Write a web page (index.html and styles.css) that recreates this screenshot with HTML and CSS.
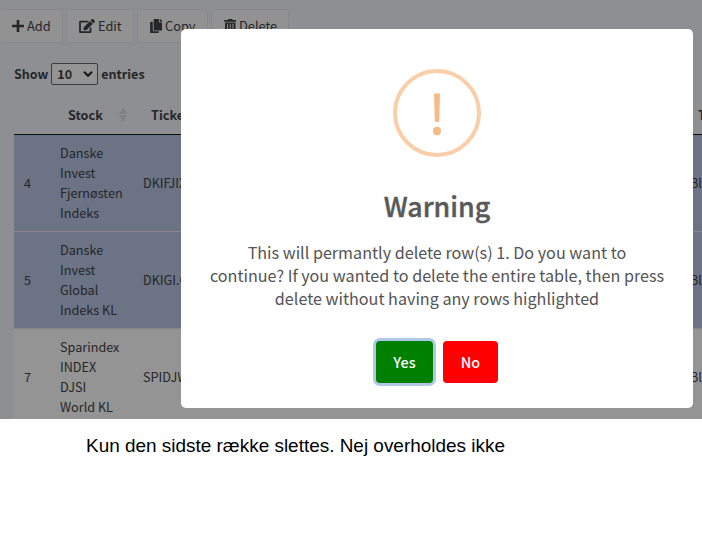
FILE: index.html
```html
<!DOCTYPE html>
<html lang="en">
<head>
<meta charset="utf-8">
<title>Warning</title>
<link rel="stylesheet" href="styles.css">
</head>
<body>
<main class="app">
  <div class="toolbar">
    <button class="tool add"><svg width="12" height="12" viewBox="0 0 12 12"><path d="M4.700 0h2.600v4.700H12v2.600H7.300V12H4.700V7.300H0V4.700h4.700z"/></svg><span>Add</span></button>
    <button class="tool edit"><svg width="16" height="14" viewBox="0 0 576 512"><path d="M402.600 83.200l90.200 90.200c3.800 3.800 3.800 10 0 13.800L274.400 405.600l-92.800 10.300c-12.400 1.400-22.900-9.100-21.500-21.500l10.300-92.800L388.800 83.200c3.800-3.800 10-3.800 13.800 0zm162-22.900l-48.800-48.800c-15.200-15.200-39.900-15.200-55.200 0l-35.400 35.400c-3.800 3.800-3.800 10 0 13.800l90.200 90.200c3.800 3.800 10 3.800 13.800 0l35.400-35.400c15.200-15.300 15.200-40 0-55.200zM384 346.200V448H64V128h229.800c3.200 0 6.200-1.300 8.500-3.500l40-40c7.600-7.600 2.200-20.500-8.500-20.500H48C21.500 64 0 85.500 0 112v352c0 26.500 21.500 48 48 48h352c26.500 0 48-21.500 48-48V306.200c0-10.700-12.900-16-20.500-8.500l-40 40c-2.200 2.300-3.500 5.300-3.500 8.500z"/></svg><span>Edit</span></button>
    <button class="tool copy"><svg width="12.500" height="14" viewBox="0 0 448 512"><path d="M320 448v40c0 13.300-10.700 24-24 24H24c-13.300 0-24-10.700-24-24V120c0-13.300 10.700-24 24-24h72v296c0 30.900 25.100 56 56 56zm0-344V0H152c-13.300 0-24 10.700-24 24v368c0 13.300 10.700 24 24 24h272c13.300 0 24-10.700 24-24V128H344c-13.200 0-24-10.800-24-24zm121-31L375 7a24 24 0 0 0-17-7h-6v96h96v-6.100a24 24 0 0 0-7-16.900z"/></svg><span>Copy</span></button>
    <button class="tool delete"><svg width="12.500" height="14" viewBox="0 0 448 512"><path fill-rule="evenodd" d="M32 464a48 48 0 0 0 48 48h288a48 48 0 0 0 48-48V128H32zM304 176h36v280h-36zM206 176h36v280h-36zM108 176h36v280h-36zM432 32H312l-9-19a24 24 0 0 0-22-13H167a24 24 0 0 0-22 13l-9 19H16A16 16 0 0 0 0 48v32a16 16 0 0 0 16 16h416a16 16 0 0 0 16-16V48a16 16 0 0 0-16-16z"/></svg><span>Delete</span></button>
  </div>
  <div class="length"><span>Show</span><span class="select">10<svg width="10" height="6" viewBox="0 0 10 6"><path d="M1 .8l4 4 4-4"/></svg></span><span>entries</span></div>
  <table class="grid">
    <colgroup><col class="c-id"><col class="c-stock"><col class="c-ticker"><col class="c-type"></colgroup>
    <thead><tr><th></th><th><div class="sortable">Stock<svg width="8" height="15" viewBox="0 0 8 15"><path d="M4 0l4 6.700H0zM4 15L0 8.300h8z"/></svg></div></th><th>Ticker</th><th>Type</th></tr></thead>
    <tbody>
      <tr class="selected"><td>4</td><td>Danske<br>Invest<br>Fjernøsten<br>Indeks</td><td>DKIFJIX</td><td>Blo</td></tr>
      <tr class="selected"><td>5</td><td>Danske<br>Invest<br>Global<br>Indeks KL</td><td>DKIGI.CO</td><td>Blo</td></tr>
      <tr><td>7</td><td>Sparindex<br>INDEX<br>DJSI<br>World KL</td><td>SPIDJW</td><td>Blo</td></tr>
    </tbody>
  </table>
</main>
<section class="modal" role="dialog">
  <div class="warn"><svg width="88" height="88" viewBox="0 0 88 88"><circle cx="44" cy="44" r="42"/><path d="M41 24.500h6l-.8 28.500h-4.400z"/><ellipse cx="44" cy="62" rx="4" ry="4.200"/></svg></div>
  <h2>Warning</h2>
  <p>This will permantly delete row(s) 1. Do you want to<br>continue? If you wanted to delete the entire table, then press<br>delete without having any rows highlighted</p>
  <div class="actions"><button class="yes">Yes</button><button class="no">No</button></div>
</section>
<p class="note">Kun den sidste række slettes. Nej overholdes ikke</p>
</body>
</html>
```
FILE: styles.css
```css
* { box-sizing: border-box; }
body { margin: 0; width: 702px; height: 549px; overflow: hidden; background: #fff; font-family: "Noto Sans CJK SC", sans-serif; font-size: 12.65px; color: #252628; }
button { font: inherit; color: inherit; margin: 0; }
.app { height: 419px; overflow: hidden; background: #8e8f93; padding-top: 9px; }
.toolbar { display: flex; gap: 3px; height: 34px; }
.tool { display: flex; align-items: center; gap: 3px; height: 34px; padding: 0 0 0 12px; background: #929292; border: 1px solid #87888a; border-radius: 3px; font-size: 12.8px; line-height: 20px; }
.tool svg { fill: #252628; flex: none; }
.add { width: 63px; border-left: 0; }
.edit { width: 68px; }
.copy { width: 71px; padding-left: 11.5px; }
.delete { width: 78px; padding-left: 11.5px; }
.length { display: flex; align-items: center; gap: 3px; height: 22px; margin: 20px 0 0 14px; font-size: 12.5px; font-weight: 700; line-height: 20px; }
.select { display: flex; align-items: center; justify-content: space-between; width: 47px; height: 22px; padding: 0 4px 0 5px; border: 1px solid #3b3b3b; border-radius: 2px; background: #949494; }
.select svg { fill: none; stroke: #151515; stroke-width: 2; }
.grid { margin: 10px 0 0 14px; width: 718px; table-layout: fixed; border-collapse: separate; border-spacing: 0; }
.c-id { width: 36px; } .c-stock { width: 83px; } .c-ticker { width: 547px; } .c-type { width: 52px; }
th { height: 40px; padding: 0 0 0 18px; text-align: left; border-bottom: 1px solid #111; line-height: 20px; }
.sortable { display: flex; justify-content: space-between; align-items: center; padding-right: 6px; }
.sortable svg { fill: #7f8080; }
td { height: 97px; padding: 8px 10px; line-height: 20px; vertical-align: middle; background: #949494; border-bottom: 1px solid #85868a; white-space: nowrap; overflow: hidden; }
.selected td { background: #6b7384; }
.modal { position: absolute; left: 181px; top: 29px; width: 512px; height: 379px; padding-top: 40px; border-radius: 5px; background: #fff; color: #545454; text-align: center; }
.warn { height: 88px; }
.warn svg { display: block; margin: 0 auto; fill: #f8bb86; }
.warn circle { fill: none; stroke: #facea8; stroke-width: 4; }
.modal h2 { margin: 29px 0 0; font-size: 26.8px; line-height: 40px; font-weight: 500; -webkit-text-stroke: .4px #595959; color: #595959; }
.modal p { margin: 15px 0 0; font-size: 16.15px; line-height: 23px; white-space: nowrap; }
.actions { display: flex; justify-content: center; gap: 10px; margin-top: 31px; }
.actions button { height: 42px; border: 0; border-radius: 4px; color: #fff; font-size: 14.4px; font-weight: 500; padding: 0 0 2px; }
.actions .yes { width: 57px; background: #008000; box-shadow: 0 0 0 3px #b0c8e5; }
.actions .no { width: 55px; background: #f00; }
.note { margin: 15px 0 0 86px; font: 18.95px/24px "Liberation Sans", sans-serif; color: #000; white-space: nowrap; }
```
